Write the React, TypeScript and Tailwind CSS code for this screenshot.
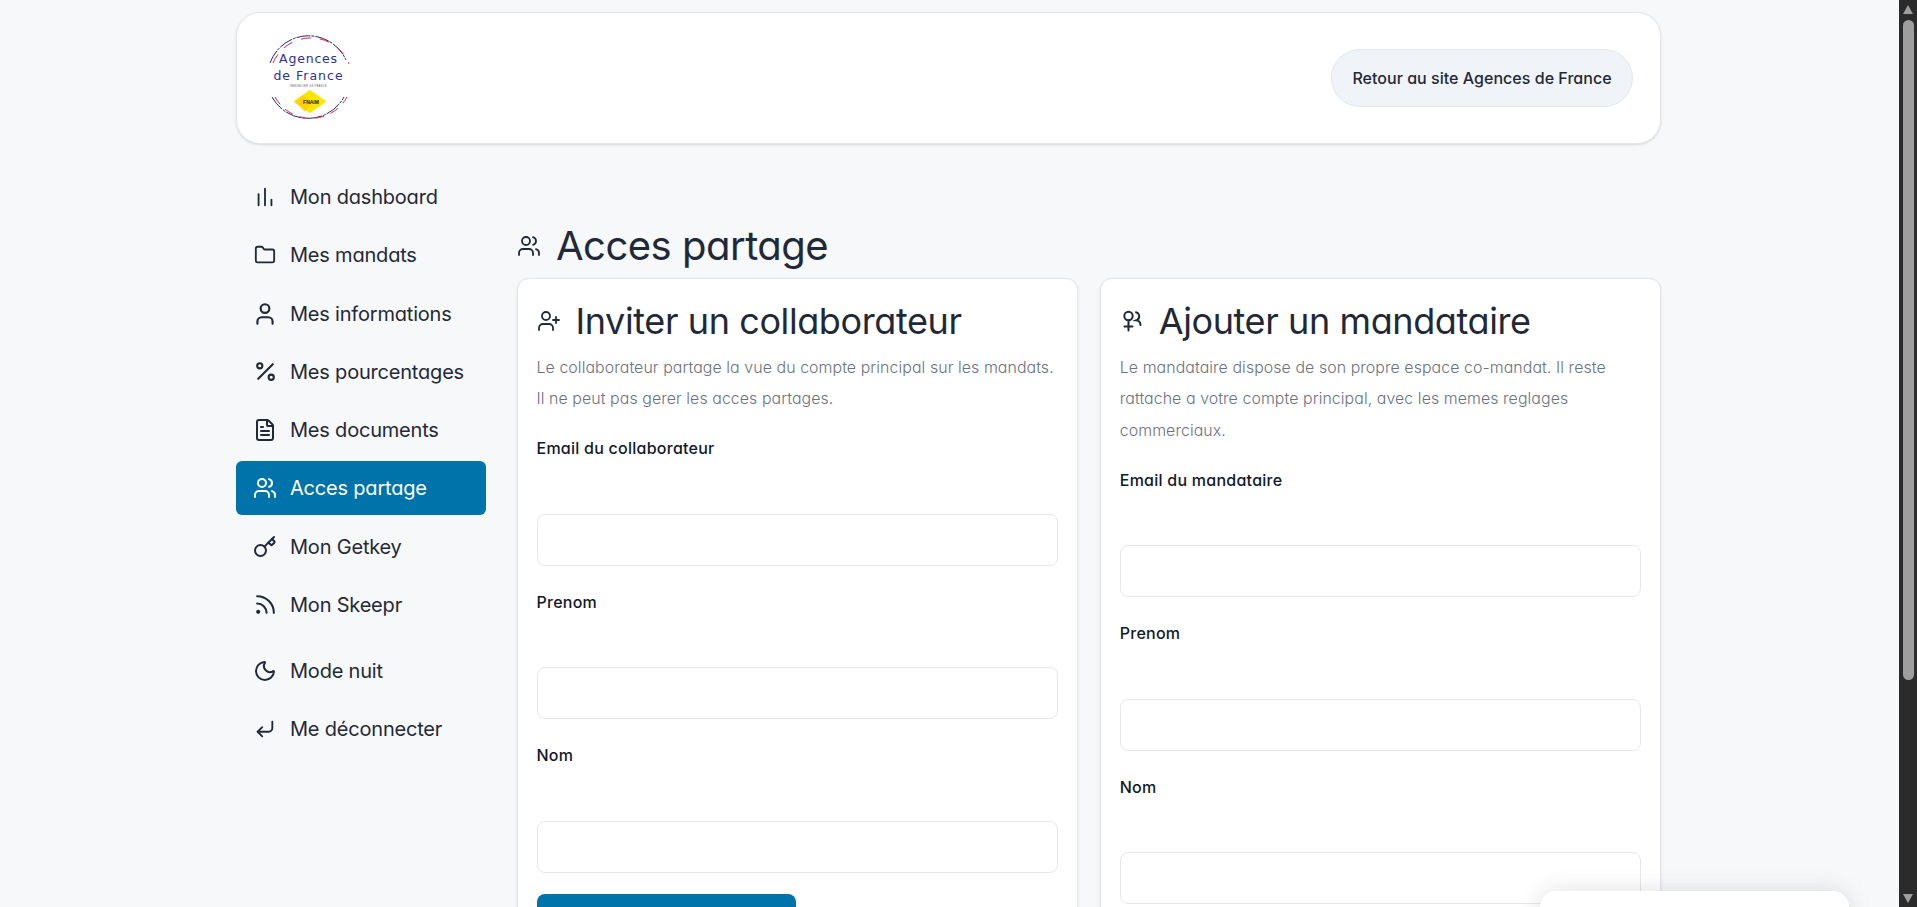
import { ChartNoAxesColumn, CornerDownLeft, FileText, Folder, Key, Moon, Percent, Rss, User, UserPlus, Users } from 'lucide-react';

const font = '[font-family:Inter,"Noto_Sans",sans-serif] [font-feature-settings:"cv11"]';

const menu = [
    { icon: ChartNoAxesColumn, label: 'Mon dashboard', iconClass: 'h-[22px] w-[22px] -scale-x-100' },
    { icon: Folder, label: 'Mes mandats', iconClass: 'h-[22px] w-[22px]' },
    { icon: User, label: 'Mes informations', iconClass: 'h-[26px] w-[26px]' },
    { icon: Percent, label: 'Mes pourcentages', iconClass: 'h-[25px] w-[25px]' },
    { icon: FileText, label: 'Mes documents', iconClass: 'h-6 w-6' },
    { icon: Users, label: 'Acces partage', iconClass: 'h-6 w-6', active: true },
    { icon: Key, label: 'Mon Getkey', iconClass: 'h-6 w-6' },
    { icon: Rss, label: 'Mon Skeepr', iconClass: 'h-[25px] w-[25px]' },
];

const menuBottom = [
    { icon: Moon, label: 'Mode nuit', iconClass: 'h-6 w-6' },
    { icon: CornerDownLeft, label: 'Me déconnecter', iconClass: 'h-[22px] w-[22px]' },
];

function Logo() {
    return (
        <svg width="90" height="90" viewBox="0 0 90 90" className="ml-[28px] shrink-0">
            <g fill="none" strokeWidth="1">
                <path d="M5 30 A41 41 0 0 1 81 27" stroke="#1e2a78" strokeDasharray="14 1 3 1" />
                <path d="M8 30 A41 41 0 0 1 84 31" stroke="#e5283a" strokeDasharray="10 9" />
                <path d="M7 64 A41 41 0 0 0 79 64" stroke="#1e2a78" strokeDasharray="16 1 3 1" />
                <path d="M10 64 A41 41 0 0 0 82 64" stroke="#e5283a" strokeDasharray="9 7" />
            </g>
            <text x="43.5" y="30" textAnchor="middle" fontSize="12.5" fill="#2e3192" letterSpacing="0.8" fontFamily="DejaVu Sans">Agences</text>
            <text x="43.5" y="47" textAnchor="middle" fontSize="12.5" fill="#2e3192" letterSpacing="1" fontFamily="DejaVu Sans">de France</text>
            <text x="43.5" y="54" textAnchor="middle" fontSize="2.6" fill="#555a88" letterSpacing="0.3" fontFamily="Liberation Sans">IMMOBILIER DE FRANCE</text>
            <path d="M45 58 L60 68.5 L45 79 L30 68.5 Z" fill="#ffe600" stroke="#ffe600" strokeWidth="2" strokeLinejoin="round" />
            <path d="M30 68.5 L38 62 L47 70 L40 79 Z" fill="#fdc800" opacity="0.7" />
            <text x="46" y="70.5" textAnchor="middle" fontSize="5" fontWeight="700" fill="#222" fontFamily="Liberation Sans">FNAIM</text>
        </svg>
    );
}

function MandataireIcon() {
    return (
        <svg width="24" height="24" viewBox="0 0 24 24" fill="none" stroke="#1f2937" strokeWidth="2" strokeLinecap="round" className="shrink-0">
            <circle cx="8.5" cy="7" r="4.2" />
            <path d="M8.5 11.5v10M4.5 17.5h8" />
            <path d="M16 3.2a4.2 4.2 0 0 1 1.6 7.4l-1.6.7a5 5 0 0 1 4.5 4.7" />
        </svg>
    );
}

function MenuItem({ item }: { item: { icon: typeof Folder; label: string; iconClass: string; active?: boolean } }) {
    return (
        <a className={`flex h-[54px] items-center gap-[14px] rounded-md pl-[18px] text-[20px] tracking-[-0.2px] ${item.active ? 'bg-[#0073aa] text-white' : 'text-[#1f2937]'}`}>
            <span className="flex w-[22px] shrink-0 justify-center">
                <item.icon className={`shrink-0 ${item.iconClass}`} strokeWidth={2} />
            </span>
            <span>{item.label}</span>
        </a>
    );
}

function Field({ label }: { label: string }) {
    return (
        <div className="mb-6">
            <label className="mb-[53.5px] block h-6 text-[16px] leading-6 font-medium tracking-[0.25px] text-[#111827]">{label}</label>
            <input className="block h-[52px] w-full rounded-lg border border-[#e5e7eb] bg-white" />
        </div>
    );
}

function Card({ icon, title, text, email, button }: { icon: React.ReactNode; title: string; text: string[]; email: string; button?: boolean }) {
    return (
        <div className="h-[800px] flex-1 rounded-xl border border-[#e5e7eb] bg-white pt-[19px] pr-[19px] pl-[19px] shadow-sm">
            <h2 className="flex h-[46px] items-center gap-[15px] text-[36px] tracking-[-0.4px] text-[#1f2937]">
                {icon}
                {title}
            </h2>
            <p className="mt-[8.5px] mb-[21.5px] text-[15.9px] leading-[31.4px] font-light tracking-[0.08px] text-[#6b7280]">
                {text.map((t) => (
                    <span key={t} className="block whitespace-nowrap">{t}</span>
                ))}
            </p>
            <Field label={email} />
            <Field label="Prenom" />
            <Field label="Nom" />
            {button && <button className="-mt-[3px] block h-[50px] w-[259px] rounded-lg bg-[#0073aa]" />}
        </div>
    );
}

export default function App() {
    return (
        <div className={`relative flex h-screen overflow-hidden bg-[#f7f8fa] ${font}`}>
            <div className="min-w-0 flex-1">
                <div className="ml-[236px] w-[1425px] pt-3">
                    <header className="flex h-[132px] items-center justify-between rounded-3xl border border-[#e5e7eb] bg-white pr-[27px] shadow-sm">
                        <Logo />
                        <a className="flex h-[58px] w-[302px] items-center justify-center rounded-full border border-[#e2e8f0] bg-[#f0f3f8] text-[16px] font-medium tracking-[0.03px] text-[#1f2937]">
                            Retour au site Agences de France
                        </a>
                    </header>
                    <div className="mt-[26px] flex">
                        <nav className="w-[250px] shrink-0">
                            <div className="flex flex-col gap-[4.25px]">
                                {menu.map((item) => (
                                    <MenuItem key={item.label} item={item} />
                                ))}
                            </div>
                            <div className="mt-3 flex flex-col gap-[4.25px]">
                                {menuBottom.map((item) => (
                                    <MenuItem key={item.label} item={item} />
                                ))}
                            </div>
                        </nav>
                        <main className="ml-[30.5px] min-w-0 flex-1 pt-[44.5px]">
                            <h1 className="flex h-[63px] items-center gap-[15.5px] text-[40px] tracking-[-0.5px] text-[#1f2937]">
                                <Users className="h-6 w-6 shrink-0" strokeWidth={1.8} />
                                Acces partage
                            </h1>
                            <div className="flex gap-[22px]">
                                <Card
                                    icon={<UserPlus className="h-6 w-6 shrink-0" strokeWidth={1.8} />}
                                    title="Inviter un collaborateur"
                                    text={['Le collaborateur partage la vue du compte principal sur les mandats.', 'Il ne peut pas gerer les acces partages.']}
                                    email="Email du collaborateur"
                                    button
                                />
                                <Card
                                    icon={<MandataireIcon />}
                                    title="Ajouter un mandataire"
                                    text={['Le mandataire dispose de son propre espace co-mandat. Il reste', 'rattache a votre compte principal, avec les memes reglages', 'commerciaux.']}
                                    email="Email du mandataire"
                                />
                            </div>
                        </main>
                    </div>
                </div>
            </div>

            {/* fake browser scrollbar */}
            <div className="relative flex w-[18px] shrink-0 flex-col items-center bg-[#2b2b2b] pt-[5px]">
                <div className="h-0 w-0 border-x-[5px] border-b-[9px] border-x-transparent border-b-[#9e9e9e]" />
                <div className="mt-[6px] h-[660px] w-[11px] rounded-full bg-[#9e9e9e]" />
                <div className="mt-auto mb-[4px] h-0 w-0 border-x-[5px] border-t-[9px] border-x-transparent border-t-[#9e9e9e]" />
            </div>

            {/* chat popup peeking at the bottom */}
            <div className="absolute top-[891px] right-[68px] h-[60px] w-[309px] rounded-2xl bg-white shadow-[0_0_24px_rgba(0,0,0,0.12)]" />
        </div>
    );
}
